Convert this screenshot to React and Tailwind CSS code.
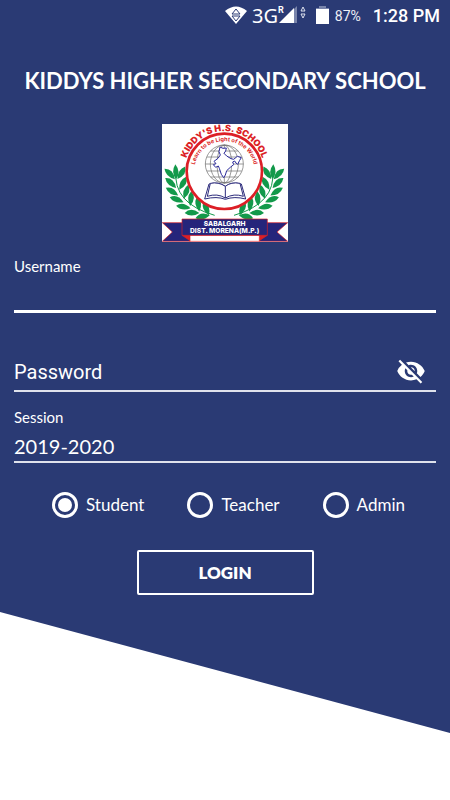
import { useState } from "react";
import { MdVisibilityOff } from "react-icons/md";

const ROLES = ["Student", "Teacher", "Admin"];

// x, y and angle of each leaf on the left branch
const LEAVES = [
    [45, 168, 45], [80, 164, 122],
    [48, 195, 42], [84, 196, 118],
    [52, 221, 32], [94, 221, 108],
    [66, 245, 20], [108, 242, 94],
    [86, 267, 10], [130, 259, 80],
    [112, 285, 0], [154, 272, 66],
    [144, 296, -12],
];

function Branch() {
    return (
        <g fill="#12994a">
            <path d="M64 158 Q54 256 180 292" fill="none" stroke="#12994a" strokeWidth="3" />
            <path d="M62 139 Q80 162 64 184 Q48 162 62 139Z" />
            {LEAVES.map(([x, y, angle]) => (
                <path
                    key={`${x}-${y}`}
                    d="M-22 0 Q-4 -19 22 0 Q-2 15 -22 0Z"
                    transform={`translate(${x} ${y}) rotate(${angle})`}
                />
            ))}
        </g>
    );
}

function SchoolLogo() {
    return (
        <svg viewBox="22 18 378 354" className="w-[126px] h-[118px] bg-white" role="img" aria-label="School crest">
            <defs>
                <path id="outer-arc" d="M93 190 A120 120 0 1 1 325 190" />
                <path id="inner-arc" d="M118 160 A91 91 0 0 1 300 160" />
            </defs>

            <Branch />
            <g transform="translate(418 0) scale(-1 1)">
                <Branch />
            </g>

            <circle cx="209" cy="160" r="113" fill="#fff" stroke="#dc1f26" strokeWidth="8" />
            <g fill="#dc1f26" textAnchor="middle" fontFamily="Inter, sans-serif">
                <text fontSize="27" fontWeight="900">
                    <textPath href="#outer-arc" startOffset="50%">KIDDY'S H.S. SCHOOL</textPath>
                </text>
                <text fontSize="17" fontWeight="700">
                    <textPath href="#inner-arc" startOffset="50%">Learn to be Light of the World</textPath>
                </text>
            </g>

            {/* globe */}
            <g fill="none" stroke="#666" strokeWidth="2">
                <circle cx="209" cy="138" r="57" />
                <ellipse cx="209" cy="138" rx="42" ry="57" />
                <ellipse cx="209" cy="138" rx="22" ry="57" />
                <path d="M209 81V195M152 138H266M157 117H261M167 99H251M157 159H261M167 177H251" />
            </g>
            <path
                d="M196 87 L205 91 L215 90 L213 99 L208 106 L216 114 L229 122 L237 124 L248 115 L260 119 L255 127 L249 139 L244 135 L240 129 L234 132 L237 140 L228 147 L216 158 L212 171 L207 179 L200 169 L194 151 L191 144 L183 148 L176 140 L184 137 L178 130 L190 121 L197 111 L193 101Z"
                fill="#fff"
                stroke="#2b2a9b"
                strokeWidth="3"
                strokeLinejoin="round"
            />

            {/* open book */}
            <g fill="#fff" stroke="#2b2a7b" strokeWidth="3" strokeLinejoin="round">
                <path d="M163 198 L150 243 Q187 234 212 244 Q239 234 273 243 L260 198 Q233 190 212 205 Q189 190 163 198Z" />
                <path d="M167 196 L158 235 Q188 225 212 240 Q238 225 266 235 L256 196 Q229 191 212 205 Q192 191 167 196Z" />
                <path d="M212 205V240" />
            </g>

            {/* ribbon */}
            <g fill="#25257b" stroke="#dc1f26" strokeWidth="2">
                <path d="M23 314H106V370H23L53 342Z" />
                <path d="M399 314H314V370H399L367 342Z" />
                <path d="M82 352H106V368ZM338 352H314V368Z" fill="#dc1f26" />
                <path d="M106 352H314V370H106Z" fill="#fff" />
                <path d="M82 303H338V352H82Z" />
            </g>
            <g fill="#fff" textAnchor="middle" fontFamily="Inter, sans-serif" fontWeight="800" fontSize="20">
                <text x="210" y="324">SABALGARH</text>
                <text x="210" y="346">DIST. MORENA(M.P.)</text>
            </g>
        </svg>
    );
}

function StatusBar() {
    return (
        <div className="h-8 pr-[10px] flex flex-row items-center justify-end font-[Roboto,sans-serif]">
            <svg viewBox="0 0 110 32" className="w-[110px] h-8 shrink-0" fill="#fff">
                <path d="M0 11 Q11 2 22 11 L11 24Z" />
                <path d="M11 9L15 14H7ZM11 21L15 16H7Z" fill="#fff" stroke="#2a3a74" strokeWidth="1" />
                <text x="27" y="23" fontSize="20" fontFamily="Noto Sans, sans-serif">3G</text>
                <text x="53" y="13" fontSize="9" fontWeight="700">R</text>
                <path d="M67 11L72 6V23H67Z" fill="#7984aa" />
                <path d="M54 23L69 8V23Z" />
                <path d="M78 7L80 11H76ZM78 18L80 14H76Z" fill="none" stroke="#dde1ee" strokeWidth="1" />
                <path d="M94 6H101V8H104V11H91V8H94Z" fill="#7984aa" />
                <path d="M91 9H104V24H91Z" />
            </svg>
            <span className="w-7 text-sm text-[#eef0f6]">87%</span>
            <span className="ml-[10px] text-lg font-medium whitespace-nowrap">1:28 PM</span>
        </div>
    );
}

export default function App() {
    const [role, setRole] = useState("Student");
    const [showPassword, setShowPassword] = useState(false);

    return (
        <div className="min-h-screen bg-white">
            <main className="bg-[#2a3a74] text-white pb-[138px] font-[Lato,sans-serif] [clip-path:polygon(0_0,100%_0,100%_100%,0_calc(100%-121px))]">
                <StatusBar />
                <h1 className="pt-[33px] text-[22px] leading-8 font-bold text-center whitespace-nowrap">
                    KIDDYS HIGHER SECONDARY SCHOOL
                </h1>
                <div className="pt-[27px] flex justify-center">
                    <SchoolLogo />
                </div>

                <form className="px-[14px] pt-[14px] flex flex-col" onSubmit={e => e.preventDefault()}>
                    <label htmlFor="username" className="text-[15px] leading-5">Username</label>
                    <input
                        id="username"
                        type="text"
                        className="w-full h-[37px] text-xl bg-transparent outline-none border-b-3 border-white"
                    />

                    <div className="mt-[38px] h-[41px] pr-[10px] flex flex-row items-center border-b-2 border-[#dfe2ec]">
                        <input
                            type={showPassword ? "text" : "password"}
                            aria-label="Password"
                            placeholder="Password"
                            className="flex-1 min-w-0 pt-0.5 text-xl bg-transparent outline-none placeholder:text-white font-[Roboto,sans-serif]"
                        />
                        <button
                            type="button"
                            aria-label="Toggle password"
                            onClick={() => setShowPassword(!showPassword)}
                        >
                            <MdVisibilityOff className="w-[30px] h-[30px]" />
                        </button>
                    </div>

                    <label htmlFor="session" className="mt-[15px] text-[15px] leading-5">Session</label>
                    <select
                        id="session"
                        className="w-full h-9 pt-1 text-xl bg-transparent appearance-none outline-none border-b-2 border-[#dfe2ec]"
                    >
                        <option>2019-2020</option>
                    </select>

                    <div className="mt-[29px] pl-[38px] pr-[31px] flex flex-row justify-between">
                        {ROLES.map(name => (
                            <label key={name} className="flex flex-row items-center gap-2 text-[17px]">
                                <input
                                    type="radio"
                                    name="role"
                                    checked={role === name}
                                    onChange={() => setRole(name)}
                                    className="appearance-none w-[26px] h-[26px] rounded-full border-3 border-white grid place-content-center before:w-[14px] before:h-[14px] before:rounded-full checked:before:bg-white"
                                />
                                {name}
                            </label>
                        ))}
                    </div>

                    <button
                        type="submit"
                        className="mt-8 w-[177px] h-[45px] self-center border-2 border-white rounded-xs text-[17px] font-extrabold"
                    >
                        LOGIN
                    </button>
                </form>
            </main>
        </div>
    );
}
